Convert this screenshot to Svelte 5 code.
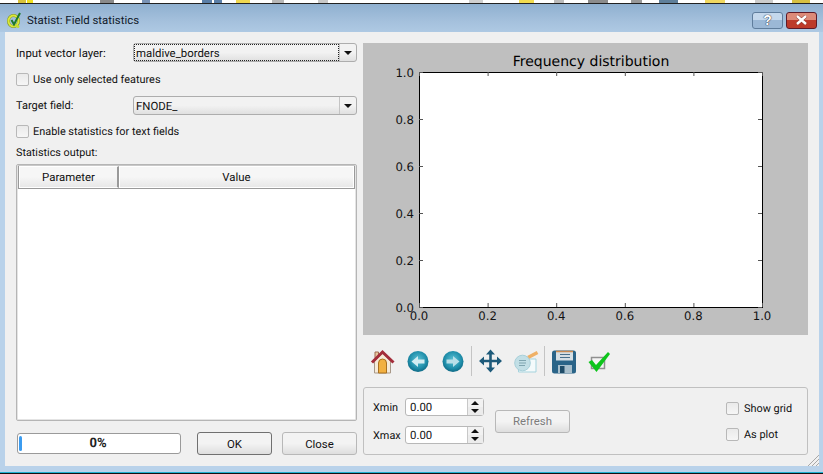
<script>
	const strip = [
		[18, 8, '#d8c23a'], [27, 6, '#f0e020'], [100, 14, '#8a8a8a'], [142, 8, '#7a93b5'],
		[202, 10, '#5b7fa8'], [214, 8, '#5b7fa8'], [236, 14, '#f0d850'], [272, 12, '#b8b8b8'],
		[318, 10, '#c8c8c8'], [469, 14, '#d0d0d0'], [519, 15, '#f2dc50'], [554, 10, '#bbb'],
		[588, 20, '#8c8c8c'], [631, 11, '#999'], [659, 19, '#5f7f9a'], [705, 20, '#f0d860'],
		[755, 18, '#ccc'], [792, 18, '#d8c040']
	];
	const ticks = [0, 0.2, 0.4, 0.6, 0.8, 1];
	const w = 343;
	const h = 235;
</script>

<div class="window">
	<div class="desktop">
		{#each strip as [left, width, color]}
			<i style="left:{left}px;width:{width}px;background:{color}"></i>
		{/each}
	</div>

	<header class="titlebar">
		<svg class="logo" width="16" height="16" viewBox="0 0 16 16">
			<ellipse cx="6.5" cy="9" rx="5" ry="5.5" fill="none" stroke="#7f9420" stroke-width="3"/>
			<ellipse cx="6.5" cy="9" rx="5" ry="5.5" fill="none" stroke="#dbe83a" stroke-width="2"/>
			<path d="M8 12.500l4 3" stroke="#c8dc30" stroke-width="2.400" fill="none"/>
			<path d="M4.500 8l2.500 4.500L13 1" fill="none" stroke="#1f7a2a" stroke-width="2"/>
		</svg>
		<span class="title">Statist: Field statistics</span>
		<div class="caption">
			<button class="cap help">?</button>
			<button class="cap close">
				<svg width="13" height="10" viewBox="0 0 13 10"><path d="M2 1l9 8M11 1l-9 8" stroke="#8d3a32" stroke-width="3.600" fill="none"/><path d="M2 1l9 8M11 1l-9 8" stroke="#fff" stroke-width="2.400" fill="none"/></svg>
			</button>
		</div>
	</header>

	<main class="client">
		<section class="left">
			<div class="row">
				<span class="lbl">Input vector layer:</span>
				<div class="combo focus"><span class="val">maldive_borders</span><span class="arrow"></span></div>
			</div>
			<label class="check c1"><span class="box"></span>Use only selected features</label>
			<div class="row">
				<span class="lbl small">Target field:</span>
				<div class="combo"><span class="val">FNODE_</span><span class="arrow"></span></div>
			</div>
			<label class="check c2"><span class="box"></span>Enable statistics for text fields</label>
			<div class="stat-lbl">Statistics output:</div>
			<div class="table">
				<div class="thead">
					<div class="th param">Parameter</div>
					<div class="th value">Value</div>
				</div>
			</div>
			<div class="bottom">
				<div class="progress"><span class="chunk"></span><b>0%</b></div>
				<button class="btn ok">OK</button>
				<button class="btn">Close</button>
			</div>
		</section>

		<section class="right">
			<svg class="chart" width="445" height="292" viewBox="0 0 445 292">
				<rect width="445" height="292" fill="#bfbfbf"/>
				<rect x="56.500" y="29.500" width={w} height={h} fill="#fff" stroke="#000"/>
				{#each ticks as t}
					<path d="M{56.500 + t * w} {29 + h}v-4M{56.500 + t * w} 29v4M56 {29.500 + h - t * h}h4M{56 + w} {29.500 + h - t * h}h-4" stroke="#555" fill="none"/>
					<text class="tick" x={56 + t * w} y={h + 42} text-anchor="middle">{t.toFixed(1)}</text>
					<text class="tick" x="51" y={h - t * h + 34} text-anchor="end">{t.toFixed(1)}</text>
				{/each}
				<text class="chart-title" x="228" y="23" text-anchor="middle">Frequency distribution</text>
			</svg>

			<div class="toolbar">
				<svg class="ic" width="27" height="27" viewBox="0 0 27 27">
					<path d="M6 4h3.500v6H6z" fill="#e8c8a0" stroke="#a06a50"/>
					<path d="M5.500 13v12h16V13L13.500 5z" fill="#f6ead8" stroke="#a89888"/>
					<path d="M9.500 25V15a4 4 0 0 1 8 0v10z" fill="#f2b040" stroke="#a87020"/>
					<path d="M3 14.500L13.500 4 24.500 14.500" fill="none" stroke="#a32c3a" stroke-width="3"/>
				</svg>
				<svg class="ic" width="27" height="27" viewBox="0 0 27 27">
					<defs>
						<radialGradient id="ball" cx="50%" cy="42%" r="58%">
							<stop offset="0" stop-color="#5fc3d6"/>
							<stop offset="0.7" stop-color="#1f8eaa"/>
							<stop offset="1" stop-color="#0f6a86"/>
						</radialGradient>
					</defs>
					<circle cx="14" cy="13.500" r="10.500" fill="url(#ball)"/>
					<path d="M7.500 13.500L14 8v3.500h6.500v4H14V19z" fill="#d3edf2"/>
				</svg>
				<svg class="ic" width="27" height="27" viewBox="0 0 27 27">
					<circle cx="14" cy="13.500" r="10.500" fill="url(#ball)"/>
					<path d="M20.500 13.500L14 8v3.500H7.500v4H14V19z" fill="#b9dfe8"/>
				</svg>
				<span class="sep"></span>
				<svg class="ic" width="27" height="27" viewBox="0 0 27 27">
					<path d="M13.500 1.500L18 6.500H14.800V11.700H20V8.500L25 13 20 17.500V14.300H14.800V19.500H18L13.500 24.500 9 19.500H12.200V14.300H7V17.500L2 13 7 8.500V11.700H12.200V6.500H9z" fill="#1d5a7a"/>
				</svg>
				<svg class="ic" width="27" height="27" viewBox="0 0 27 27">
					<path d="M6.500 11h17.500v13H6.500z" fill="#f4fafb" stroke="#a5d3dd"/>
					<path d="M16 9.500L25.500 4.500" stroke="#efb066" stroke-width="3.500" fill="none"/>
					<circle cx="10.500" cy="15" r="7.800" fill="#c2dfe6" stroke="#a8d0da"/>
					<path d="M7 12.500h7M7 15h7M7 17.500h6" stroke="#7fa5b0"/>
				</svg>
				<span class="sep"></span>
				<svg class="ic" width="27" height="27" viewBox="0 0 27 27">
					<rect x="2" y="2.500" width="24" height="23" rx="2.500" fill="#2a6488"/>
					<path d="M6 3h17v9.500H6z" fill="#d5dfe4"/>
					<path d="M6 3.500h17" stroke="#c98a50" stroke-width="1.500"/>
					<path d="M10 6.500h10M10 9.500h10" stroke="#48708a"/>
					<rect x="8" y="17" width="14" height="8" fill="#a8bfcc"/>
					<rect x="10" y="18" width="4.500" height="7" fill="#1f4c68"/>
				</svg>
				<svg class="ic" width="27" height="27" viewBox="0 0 27 27">
					<rect x="6.500" y="9.500" width="13" height="11" fill="#f4f4f4" stroke="#909090" stroke-width="1.500"/>
					<path d="M3.500 14L7 12l4 5L23 4l2 2-13.500 18z" fill="#0ec41c"/>
				</svg>
			</div>

			<div class="group">
				<div class="spins">
					<div class="spinrow">
						<span class="slbl">Xmin</span>
						<div class="spin"><span class="num">0.00</span><span class="updown"><i class="up"></i><i class="down"></i></span></div>
					</div>
					<div class="spinrow">
						<span class="slbl">Xmax</span>
						<div class="spin"><span class="num">0.00</span><span class="updown"><i class="up"></i><i class="down"></i></span></div>
					</div>
				</div>
				<button class="btn refresh">Refresh</button>
				<div class="opts">
					<label class="check"><span class="box"></span>Show grid</label>
					<label class="check"><span class="box"></span>As plot</label>
				</div>
			</div>
		</section>

		<svg class="grip" width="12" height="12" viewBox="0 0 12 12">
			<path d="M12 1L1 12M12 5L5 12M12 9L9 12" stroke="#a8a8a8" fill="none"/>
		</svg>
	</main>

	<div class="frame-bottom"></div>
</div>

<style>
	:global(body) {
		margin: 0;
		background: #b9d2ea;
	}
	.window {
		position: relative;
		width: 823px;
		height: 474px;
		overflow: hidden;
		display: flex;
		flex-direction: column;
		font-family: Roboto, sans-serif;
		font-size: 11.4px;
		text-rendering: geometricPrecision;
		color: #111;
		background: #b9d2ea;
	}
	.desktop {
		position: relative;
		height: 3px;
		background: #fff;
		border-bottom: 1px solid #222;
	}
	.desktop i {
		position: absolute;
		top: 0;
		height: 3px;
	}
	.titlebar {
		height: 28px;
		box-sizing: border-box;
		display: flex;
		align-items: center;
		padding: 4px 6px 0 7px;
		background: linear-gradient(#8fb0d0, #a4c0dc 60%, #aec9e3);
	}
	.logo {
		margin-right: 4px;
	}
	.title {
		font-size: 11.4px;
		color: #101828;
	}
	.caption {
		margin-left: auto;
		display: flex;
		gap: 3px;
	}
	.cap {
		width: 31px;
		height: 17px;
		padding: 0;
		border-radius: 3px;
		display: flex;
		align-items: center;
		justify-content: center;
	}
	.help {
		border: 1px solid #5f7d9c;
		color: #fff;
		font: bold 14px 'Liberation Sans', sans-serif;
		text-shadow: 0 0 1px #223, 0 0 1px #223;
		background: linear-gradient(#c4d8ec 50%, #9bb8d6 50%);
	}
	.close {
		border: 1px solid #5e1a28;
		background: linear-gradient(#dc8a78 50%, #bd3a2a 50%);
	}
	.client {
		position: relative;
		flex: 1;
		margin: 0 4px 0 5px;
		background: #f0f0f0;
		display: flex;
		gap: 6px;
		padding: 11px;
		min-height: 0;
	}
	.left {
		width: 341px;
		display: flex;
		flex-direction: column;
	}
	.row {
		display: flex;
		align-items: center;
		height: 19px;
	}
	.lbl {
		width: 117px;
		flex: none;
	}
	.small {
		font-size: 11px;
	}
	.combo {
		flex: 1;
		height: 19px;
		box-sizing: border-box;
		border: 1px solid #adadad;
		border-radius: 3px;
		background: linear-gradient(#f2f2f2 50%, #e0e0e0);
		display: flex;
		align-items: center;
		padding-left: 2px;
		position: relative;
	}
	.combo.focus .val {
		outline: 1px dotted #222;
		outline-offset: -1px;
		position: absolute;
		left: 0;
		top: 0;
		width: 203px;
		height: 17px;
		line-height: 18px;
		padding-left: 2px;
	}
	.arrow {
		position: absolute;
		right: 0;
		top: 0;
		bottom: 0;
		width: 16px;
		border-left: 1px solid #c4c4c4;
	}
	.arrow::after {
		content: '';
		position: absolute;
		left: 4px;
		top: 7px;
		border: 4px solid transparent;
		border-top: 4px solid #111;
		border-bottom: 0;
	}
	.check {
		display: flex;
		align-items: center;
		gap: 4px;
		height: 13px;
		font-size: 10.9px;
	}
	.c1 {
		margin: 11px 0 10px;
	}
	.c2 {
		margin-top: 10px;
	}
	.box {
		width: 11px;
		height: 11px;
		border: 1px solid #b8b8b8;
		border-radius: 2px;
		background: linear-gradient(#eaeaea, #f6f6f6);
		flex: none;
	}
	.stat-lbl {
		margin-top: 7px;
		height: 16px;
		line-height: 16px;
		margin-bottom: 3px;
		font-size: 10.8px;
	}
	.table {
		height: 257px;
		box-sizing: border-box;
		border: 1px solid #b5b5b5;
		border-radius: 2px;
		background: #fff;
		padding: 1px;
		box-shadow: inset 0 0 0 1px #e4e4e4;
	}
	.thead {
		display: flex;
		height: 23px;
		background: linear-gradient(#f6f6f6 50%, #e6e6e6);
		border: 1px solid #9a9a9a;
		border-width: 0 1px 1px 1px;
		box-sizing: border-box;
		box-shadow: 0 -1px 0 #c8c8c8;
	}
	.th {
		display: flex;
		align-items: center;
		justify-content: center;
		border: 1px solid #fff;
	}
	.param {
		width: 100px;
		flex: none;
		box-sizing: border-box;
		border-right: 2px solid #9a9a9a;
	}
	.value {
		flex: 1;
	}
	.bottom {
		display: flex;
		align-items: center;
		margin-top: 11px;
		height: 23px;
	}
	.progress {
		width: 164px;
		height: 21px;
		margin-left: 1px;
		box-sizing: border-box;
		border: 1px solid #9a9a9a;
		border-radius: 3px;
		background: #fff;
		position: relative;
		text-align: center;
		font-size: 13px;
		line-height: 19px;
		color: #222;
		padding-right: 2px;
	}
	.chunk {
		position: absolute;
		left: 1px;
		top: 2px;
		bottom: 2px;
		width: 3px;
		border-radius: 2px;
		background: #3b9cf0;
	}
	.btn {
		width: 75px;
		height: 23px;
		padding: 0;
		font: inherit;
		color: #111;
		border: 1px solid #b8b8b8;
		border-radius: 3px;
		background: linear-gradient(#f3f3f3 50%, #dedede);
		margin-left: 10px;
	}
	.ok {
		margin-left: 16px;
		border-color: #707070;
	}
	.right {
		width: 445px;
		display: flex;
		flex-direction: column;
	}
	.chart {
		display: block;
	}
	.tick {
		font: 11.700px 'DejaVu Sans', sans-serif;
		fill: #111;
	}
	.chart-title {
		font: 14px 'DejaVu Sans', sans-serif;
		fill: #000;
	}
	.toolbar {
		display: flex;
		align-items: center;
		height: 32px;
		margin-top: 10px;
		padding-left: 2px;
	}
	.ic {
		flex: none;
		margin: 0 4px;
	}
	.sep {
		width: 1px;
		height: 30px;
		background: #c4c4c4;
		margin: 0 1px;
	}
	.group {
		margin-top: 10px;
		height: 68px;
		box-sizing: border-box;
		border: 1px solid #c0c0c0;
		border-radius: 3px;
		display: flex;
		align-items: center;
		padding: 0 16px 0 9px;
	}
	.spins {
		display: flex;
		flex-direction: column;
		gap: 10px;
	}
	.spinrow {
		display: flex;
		align-items: center;
		height: 18px;
	}
	.slbl {
		width: 32px;
		font-size: 10.9px;
	}
	.spin {
		width: 79px;
		height: 18px;
		box-sizing: border-box;
		border: 1px solid #b8b8b8;
		border-radius: 3px;
		background: #fff;
		display: flex;
		align-items: center;
		padding-left: 4px;
		position: relative;
	}
	.updown {
		position: absolute;
		right: 0;
		top: 0;
		bottom: 0;
		width: 15px;
		background: linear-gradient(#f2f2f2 47%, #c8c8c8 47%, #c8c8c8 53%, #ececec 53%);
		border-left: 1px solid #c8c8c8;
	}
	.updown i {
		position: absolute;
		left: 3px;
		border: 4px solid transparent;
	}
	.updown .up {
		top: 2px;
		border-top: 0;
		border-bottom-color: #111;
	}
	.updown .down {
		bottom: 2px;
		border-bottom: 0;
		border-top-color: #111;
	}
	.refresh {
		margin-left: 11px;
		color: #7c7c7c;
	}
	.opts {
		margin-left: auto;
		display: flex;
		flex-direction: column;
		gap: 13px;
		width: 65px;
	}
	.opts .check {
		gap: 5px;
		white-space: nowrap;
	}
	.grip {
		position: absolute;
		right: 0;
		bottom: 0;
	}
	.frame-bottom {
		height: 8px;
		flex: none;
		background: #b9d2ea;
	}
	.window::after {
		content: '';
		position: absolute;
		left: 0;
		right: 0;
		bottom: 0;
		height: 2px;
		background: linear-gradient(#1fb0d0 50%, #111 50%);
	}
</style>
